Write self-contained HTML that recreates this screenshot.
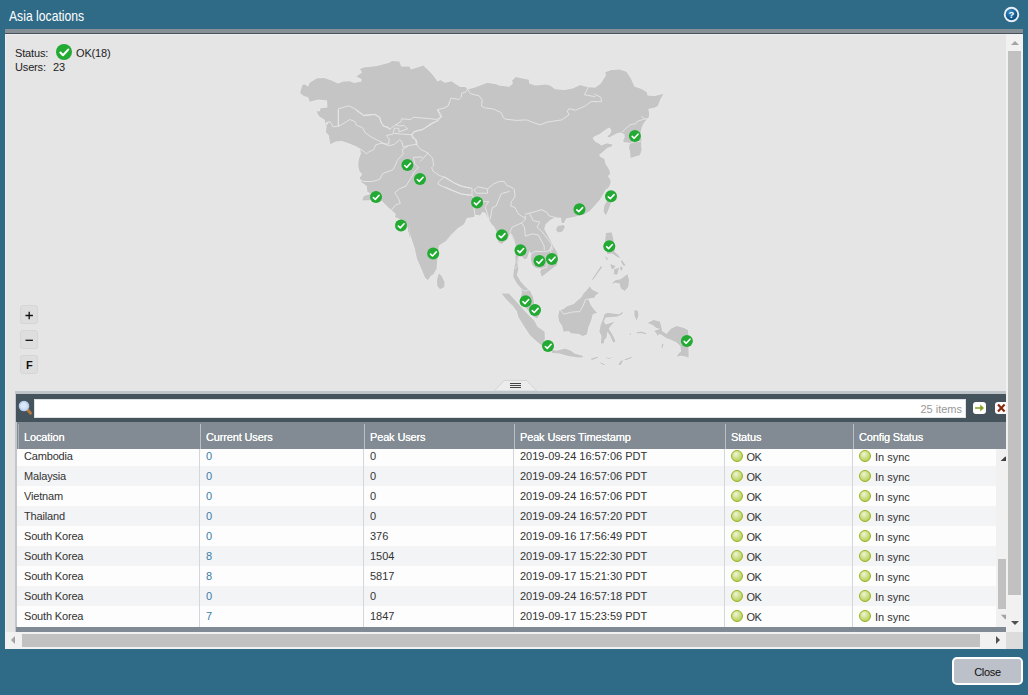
<!DOCTYPE html>
<html>
<head>
<meta charset="utf-8">
<title>Asia locations</title>
<style>
html,body{margin:0;padding:0;}
body{width:1028px;height:695px;overflow:hidden;background:#2f6a87;font-family:"Liberation Sans",sans-serif;font-size:11px;color:#222;position:relative;}
.abs{position:absolute;}
#title{left:9px;top:6px;color:#fff;font-size:14.5px;line-height:20px;transform-origin:0 50%;transform:scaleX(0.84);white-space:nowrap;}
#strip{left:5px;top:29px;width:1018px;height:4px;background:#868e96;}
#dline{left:5px;top:33px;width:1018px;height:1px;background:#47535c;}
#content{left:5px;top:34px;width:1018px;height:615px;background:#e5e5e5;}
#hl{left:5px;top:34px;width:1001px;height:1px;background:#ededed;}
#vl{left:5px;top:34px;width:1px;height:598px;background:#ededed;}
/* outer scrollbars */
#vsb{left:1006px;top:34px;width:17px;height:598px;background:#f1f1f1;}
#vthumb{left:1008px;top:51px;width:13px;height:544px;background:#c1c1c1;}
#hsb{left:5px;top:632px;width:1001px;height:17px;background:#f1f1f1;}
#hthumb{left:22px;top:634px;width:958px;height:13px;background:#c1c1c1;}
#corner{left:1006px;top:632px;width:17px;height:17px;background:#dcdcdc;}
.tri{width:0;height:0;}
/* status */
.stxt{letter-spacing:-0.15px;font-size:11px;line-height:13px;color:#222;white-space:nowrap;}
/* zoom buttons */
.zb{width:18px;height:19px;border:1px solid #d6d6d6;background:#dedede;border-radius:3px;box-sizing:border-box;}
/* grid */
#gtop{left:15px;top:391px;width:991px;height:3px;background:#bfc4c9;}
#gbar{left:16px;top:394px;width:990px;height:28px;background:#45535d;}
#gsearch{left:34px;top:399px;width:932px;height:19px;background:#fff;box-sizing:border-box;border:1px solid #dfe3e6;}
#gitems{left:900px;top:403px;width:62px;text-align:right;color:#999;font-size:11px;line-height:13px;}
#ghead{left:17px;top:422px;width:989px;height:27px;background:#828b93;}
.hc{letter-spacing:-0.15px;top:423px;height:26px;line-height:28px;color:#fff;font-size:11px;white-space:nowrap;text-shadow:0 0 0.5px #fff;}
.hs{top:424px;width:1px;height:25px;background:#b9bfc5;}
#gbody{left:17px;top:449px;width:979px;height:178px;overflow:hidden;background:#fdfdfd;}
.row{position:absolute;left:0;width:979px;height:20px;}
.row.alt{background:#f3f4f6;}
.c{position:absolute;top:0;height:20px;line-height:21px;font-size:11px;color:#333;white-space:nowrap;}
.c.lnk{color:#3a7ca8;}
.bs{position:absolute;top:0;width:1px;height:178px;background:#d3d7db;}
.dot{position:absolute;top:4px;width:12px;height:12px;border-radius:50%;box-sizing:border-box;border:1px solid #98b21c;background:radial-gradient(circle at 40% 32%,#eef4d6 0%,#cde089 45%,#a8c440 100%);}
#gleft1{left:15px;top:394px;width:1px;height:28px;background:#c3c7cb;}
#gleft1b{left:15px;top:422px;width:2px;height:210px;background:#c3c7cb;}
#gleft2{left:18px;top:424px;width:1px;height:25px;background:#a9b0b7;}
#gbot{left:16px;top:627px;width:990px;height:5px;background:#808a94;}
#ivsb{left:996px;top:449px;width:10px;height:178px;background:#f1f1f1;}
#ivthumb{left:998px;top:559px;width:8px;height:50px;background:#c1c1c1;}
/* close */
#close{left:952px;top:657px;width:71px;height:28px;box-sizing:border-box;border:2px solid #fff;border-radius:5px;background:#bcc0c8;text-align:center;font-size:11px;line-height:27px;letter-spacing:-0.3px;color:#111;}
</style>
</head>
<body>
<div id="title" class="abs">Asia locations</div>
<div id="strip" class="abs"></div>
<div id="dline" class="abs"></div>
<div id="content" class="abs"></div>
<div id="hl" class="abs"></div>
<div id="vl" class="abs"></div>
<!--MAP-->
<svg class="abs" style="left:0;top:0" width="1006" height="392" viewBox="0 0 1006 392">
<path d="M300.1 92.9 302.3 84.9 304.5 84.2 308.1 86.4 309.6 82.7 316.9 78.3 324.2 78.1 331.5 80.5 338.0 83.5 343.2 81.6 349.7 81.3 354.1 83.0 361.4 81.6 361.4 79.1 356.3 76.6 362.1 72.5 359.9 68.9 363.6 67.4 376.7 65.9 388.4 63.0 392.0 61.1 399.3 61.6 401.2 66.4 409.5 66.4 411.0 69.6 423.4 65.5 431.4 73.2 437.7 81.6 440.2 80.1 445.0 82.7 451.6 81.3 455.9 84.2 460.3 87.1 465.4 87.1 467.6 89.3 474.2 87.8 487.3 82.7 496.1 84.2 499.0 85.6 509.2 86.8 512.9 83.5 512.1 80.5 515.8 76.9 528.9 79.8 529.2 83.5 535.5 85.6 545.7 84.6 550.1 85.6 555.2 89.3 564.7 90.0 573.4 88.3 580.0 84.9 587.3 87.1 595.0 87.8 600.8 83.5 605.9 75.4 605.2 72.2 611.1 69.9 619.8 69.6 626.4 71.8 630.8 78.3 634.4 86.4 641.7 88.9 646.8 92.2 647.5 95.6 654.8 95.9 663.6 93.7 660.7 98.8 657.7 106.1 654.8 107.5 648.3 109.0 649.3 113.4 648.7 117.7 645.3 119.2 647.0 119.3 644.0 122.8 641.7 127.5 640.5 133.3 641.5 139.2 641.1 143.9 641.7 149.7 640.0 154.9 630.6 157.9 630.0 150.9 628.9 147.4 630.0 143.3 624.8 142.7 623.0 140.9 624.8 136.8 624.2 133.9 620.7 132.4 617.2 133.3 609.0 137.4 607.3 136.3 610.2 133.9 611.4 130.4 609.6 127.5 606.1 129.3 599.7 133.9 593.9 136.8 592.7 138.6 595.6 142.1 598.5 143.3 601.4 145.6 606.7 143.3 612.5 144.4 611.9 146.2 607.3 147.9 603.8 150.9 599.1 154.9 600.3 156.7 604.4 159.0 605.5 163.7 609.0 169.5 610.2 172.4 609.6 174.8 607.9 176.0 610.2 179.5 610.8 182.4 609.0 187.0 606.1 190.0 606.7 187.8 603.0 194.4 599.4 200.2 595.0 205.3 589.5 211.2 583.6 214.8 573.4 217.0 566.1 218.5 563.9 222.9 561.7 222.9 561.0 217.7 555.2 217.5 550.1 219.9 545.7 224.3 544.2 228.7 547.1 234.5 550.8 241.1 553.7 246.9 556.6 251.3 557.4 255.0 557.0 249.8 557.7 254.2 557.5 261.5 557.0 265.1 551.9 268.8 545.3 273.9 541.7 276.8 540.2 271.7 541.7 268.8 535.9 268.0 532.2 265.1 530.8 259.3 531.5 253.5 529.3 251.3 527.1 258.6 524.2 259.3 522.0 256.4 519.1 256.4 518.3 261.5 518.3 268.8 516.9 275.3 520.5 281.2 525.6 287.0 530.0 290.7 533.2 297.2 534.1 303.8 537.3 311.1 538.8 316.2 536.6 318.4 533.2 316.2 530.0 312.6 524.9 306.7 521.0 300.9 521.0 296.5 522.0 292.9 521.3 288.5 516.9 283.4 513.2 276.8 514.0 268.8 515.4 262.9 515.4 255.6 516.1 246.9 513.2 239.6 510.3 233.0 507.4 239.6 501.5 244.0 497.9 241.8 497.1 231.6 496.8 232.3 494.6 227.2 491.7 224.3 488.8 219.2 485.1 212.6 482.2 212.2 480.0 215.6 474.9 214.8 474.2 217.0 466.9 218.0 464.0 224.3 458.1 228.0 450.8 234.5 445.0 241.1 457.7 227.9 451.2 235.2 446.1 241.1 438.8 245.4 437.3 260.0 436.6 268.8 433.7 273.9 430.8 276.1 427.8 280.2 424.9 277.5 422.0 270.2 416.9 258.6 414.7 248.3 410.3 235.2 408.9 225.0 410.3 239.6 408.1 230.9 407.4 226.5 400.1 219.2 395.0 217.0 395.7 214.1 388.4 207.5 382.6 201.7 382.7 201.2 370.3 200.2 362.0 200.5 363.8 196.1 371.1 193.9 367.4 191.7 366.7 185.9 361.6 182.2 359.4 177.9 362.3 174.2 359.4 171.3 358.2 165.5 358.7 159.6 360.9 153.8 360.1 148.7 356.5 146.5 349.2 143.6 341.9 140.9 336.1 141.4 330.2 144.3 328.8 135.5 325.8 131.9 326.6 126.1 324.4 118.8 325.9 126.5 329.3 121.4 325.9 123.6 324.9 119.9 319.1 116.3 316.2 111.2 319.8 111.2 320.5 108.3 327.4 107.5 327.1 100.5 318.3 99.5 309.6 101.7 308.1 97.3 303.8 95.9ZM438.8 273.2 441.7 276.1 444.6 281.9 444.3 287.0 440.2 289.2 437.3 286.3 437.0 279.7ZM556.6 228.0 558.1 225.8 563.9 225.0 564.9 227.2 562.5 231.6 558.1 232.6 556.2 230.6ZM609.3 198.8 611.1 201.7 610.2 205.3 607.8 211.2 605.8 215.4 603.5 211.6 604.2 206.1 606.7 201.0ZM605.9 233.0 611.7 232.3 613.5 239.6 613.9 246.9 614.7 252.0 618.3 254.9 620.2 258.3 616.8 256.4 611.7 253.5 607.4 254.2 605.2 246.9 605.2 239.6ZM611.8 252.5 618.7 256 620.6 258.8 615.3 255.8ZM605.0 255.4 608.9 259.8 606.1 259.5ZM621.6 259.6 625.8 265.5 623.6 266.1 621.0 262ZM610.4 264.1 615.8 266 612.7 269.8 610.8 267.2ZM614.2 269.3 619.3 267.5 617.2 274.8 613.7 274.3ZM620.2 266.2 622.7 267.2 622 270.9 620.2 269.8ZM592 279.3 601.1 265.8 602.2 267.2 592.8 280ZM611.5 284 615.3 280.2 620.4 279.3 624.2 276.4 627.4 274.1 629.1 280.2 628.2 287.1 624.8 290.9 620.8 288.5 619.6 283.6 615.3 282.8ZM501.6 293.5 508.9 293.5 514.0 298.9 519.8 305.4 524.9 311.3 530.0 316.4 534.4 320.8 537.3 326.6 544.6 331.7 544.9 339.0 543.4 343.4 545.3 347.0 542.4 346.0 537.3 341.9 530.0 335.3 524.2 326.6 518.3 317.1 516.9 311.3 512.5 305.4 505.9 298.9ZM551.2 349.2 556.3 350.7 565.0 348.5 570.9 350.7 574.5 353.6 582.6 355.8 583.3 357.2 578.2 357.5 568.0 356.1 559.2 353.6 551.9 352.9ZM589.8 286.2 592.0 289.4 598.9 293.0 595.7 295.2 594.2 298.1 588.4 299.3 590.6 304.7 594.2 309.8 597.1 312.7 592.8 314.2 591.3 320.0 588.4 327.3 586.9 334.6 582.6 336.1 578.9 333.9 570.9 333.2 568.7 331.0 563.6 331.7 562.1 325.9 559.2 321.5 558.2 316.4 559.2 310.5 563.6 309.1 567.2 306.2 573.8 304.0 578.9 298.9 582.6 294.5 586.9 290.1ZM604.4 314.2 607.4 312.7 619.0 314.2 623.4 311.3 622.0 314.2 617.6 316.4 605.9 317.4 603.7 321.5 605.9 324.4 610.3 322.9 614.7 321.5 610.3 326.6 608.8 328.8 611.7 333.2 614.7 339.0 615.4 341.9 613.2 342.6 610.3 336.1 607.4 331.7 606.6 337.5 604.4 339.7 603.7 343.4 600.8 343.4 601.5 336.1 599.3 331.7 600.8 324.4 603.0 319.3ZM634.4 309.8 638.0 311.0 638.5 315.6 636.6 320.8 634.4 315.6ZM628.6 333.2 631.5 333.4 630.8 334.9ZM636.6 332.0 641.7 331.4 646.1 333.2 646.8 334.6 641.7 333.2 636.6 333.2ZM662.1 343.4 663.6 344.1 662.4 348.5 661.4 347.7ZM590.6 358.7 597.1 356.8 598.6 357.5 592.0 359.9ZM603.7 357.2 608.8 358.0 613.9 356.8 608.8 359.0ZM600.1 362.3 605.2 364.5 604.4 365.3 600.8 363.8ZM618.3 364.5 620.5 360.9 623.4 360.1 620.5 365.3ZM624.1 359.4 631.4 356.8 632.2 357.5 625.6 360.4ZM647.5 322.9 653.4 320.0 659.9 321.5 661.4 327.3 662.1 331.0 666.5 333.9 670.9 328.8 676.7 326.1 684.0 328.0 688.4 330.2 688.7 334.6 689.1 358.0 685.5 356.5 681.1 355.8 676.7 356.8 678.9 352.9 681.1 351.4 680.4 346.3 676.7 342.6 670.9 339.7 666.5 338.3 662.1 335.3 659.2 333.9 657.7 336.1 656.3 333.2 654.1 331.0 659.9 328.8 656.3 328.0 652.6 325.1Z" fill="#c5c5c5" stroke="#eaeaea" stroke-width="1.2" stroke-linejoin="round" paint-order="stroke"/>
<path d="M467.6 89.3 470.5 93.7 479.3 95.9 482.2 100.2 481.5 106.1 484.4 107.8 493.2 109.0 501.2 112.6 503.4 117.7 505.6 119.2 516.5 120.4 526.7 119.9 534.0 122.9 540.6 124.8 547.1 122.1 561.7 119.9 569.0 114.8 567.3 111.2 569.0 108.7 575.6 110.2 585.1 106.1 590.9 101.7 595.0 101.4M595.0 94.4 600.8 97.3 601.6 101.7 595.0 101.7M588.7 86.4 584.4 94.7 595.0 96.6M467.6 89.3 465.4 92.2 461.8 93.2 461.1 97.3 458.9 99.5 451.1 98.0 447.9 106.1 445.0 107.5M445.0 107.8 437.3 109.7 440.9 117.0 438.0 120.7 430.7 123.6 423.4 129.4 416.1 130.9 411.7 134.5 412.5 138.2 416.1 139.6 417.3 144.3M622.0 132.0 630.0 124.8 635.9 123.6 637.3 121.4 643.9 119.2 646.1 118.5M641.7 116.3 644.6 119.2M624.8 142.7 630.0 143.3 634.7 141.7 640.5 141.5M338.2 110.0 338.2 126.1 341.9 124.6 349.9 119.5 355.0 121.7 356.5 125.3 362.3 127.5 365.2 132.6 371.1 137.0 378.4 140.6 382.7 142.8M338.2 126.1 333.1 126.8 330.2 121.7 326.6 122.4 325.8 126.1M360.1 148.7 366.7 153.8 368.2 152.3 374.0 149.4 375.5 145.0 379.8 143.6 382.7 143.3 388.6 145.8 394.4 144.3 399.5 139.9 401.7 141.4 403.2 147.2 407.6 145.8 416.3 144.3M355.8 110.0 363.8 115.8 375.5 114.4 379.8 117.3 381.3 123.1 384.2 126.1 390.0 129.0 395.9 124.6 401.0 121.7 401.7 118.8 410.5 119.5 413.4 117.3 422.1 118.0 430.9 118.8 436.7 119.5 441.8 116.6 438.2 110.0M438.2 120.2 430.9 124.6 424.3 128.2 422.1 129.7 413.4 131.9 411.9 135.5 415.6 139.2 416.3 144.3M382.7 143.3 388.6 144.3 389.3 139.2 386.4 135.5 393.0 134.1 394.4 128.2 398.8 128.2 398.8 131.9 407.6 129.0 403.9 125.3 399.5 126.1 395.9 124.6M394.4 133.3 401.7 134.1 411.9 134.8M338.5 126.5 338.5 108.7 349.0 105.8 356.3 109.7 363.6 115.1 374.5 114.5 379.6 117.7 381.1 122.1 383.3 126.2 388.4 127.2 389.8 129.4M359.4 179.3 363.8 181.5 372.5 181.5 379.8 179.3 382.7 173.5 393.0 169.8 395.9 164.0 397.3 160.3 403.2 153.8 402.4 149.4 407.6 146.5M416.3 144.3 420.7 149.4 428.0 153.0 420.7 161.1M428.0 153.0 432.4 158.2 433.8 165.5 431.6 167.6 433.1 171.3 439.7 175.7 444.0 177.1 438.2 182.2 438.2 184.4 451.3 190.3 461.5 193.9 470.0 195.4M444.0 177.1 454.2 183.0 460.1 185.9 470.0 188.1M422.1 157.0 413.4 157.4 414.8 164.0 418.5 167.6 414.8 171.3 410.5 178.6 406.1 185.9 399.5 188.8 394.7 192.9 398.1 197.6 400.3 203.4 395.9 204.8 391.5 210.0M445.0 176.9 453.8 182.7 462.5 186.4 472.0 188.3 472.0 195.1 461.1 194.1 453.8 190.8 445.0 187.1M474.2 190.0 477.8 186.8 487.3 188.9 487.6 193.2 476.4 193.2 474.2 190.0M472.0 195.1 474.2 198.8 473.5 204.6 474.9 214.8M474.2 198.8 481.5 201.7 488.8 201.7 485.1 206.8 487.3 213.4 488.8 219.2M487.6 188.9 493.2 184.2 498.3 181.7 504.1 181.3 507.0 185.6 509.9 186.4 514.3 189.3 515.0 196.6 511.4 201.7 510.7 206.1 515.0 207.5 518.0 213.4 523.8 217.7 525.3 216.3 525.3 219.2M509.2 191.5 501.2 193.7 496.1 206.1 492.4 207.5 490.2 219.2M525.3 214.1 529.6 213.1 542.0 209.7 547.1 212.6 548.6 215.6 555.2 217.5M525.3 219.2 521.6 222.9 524.5 227.2 525.3 236.0 532.6 233.8 538.4 235.0 544.2 246.2 544.2 249.8M529.6 213.4 533.3 220.7 539.8 222.1 536.9 227.2 541.3 230.9 547.1 238.2 551.5 244.0 552.3 249.8M521.6 222.9 512.1 227.2 509.9 232.3 513.6 238.2 515.0 244.7M531.5 253.5 535.1 251.3 543.2 251.6 549.0 251.0 551.2 246.9M551.2 246.9 550.5 252.0 553.4 254.2 547.5 256.4 546.8 267.3 541.7 268.8M519.1 256.4 516.9 261.5 518.3 265.1 514.7 268.8M522.0 289.2 524.9 291.4 527.8 289.9 529.3 289.9M560.7 310.5 563.6 314.2 572.3 312.0 579.6 311.6 582.6 306.9 585.5 299.6 592.8 298.4M578.9 298.9 581.1 297.4 582.6 294.5M688.7 330.2 689.1 358.0" fill="none" stroke="#e6e6e6" stroke-width="0.9" stroke-linejoin="round" stroke-linecap="round"/>
<g transform="translate(407.4 165)"><circle r="6" fill="#22aa33"/><path d="M-2.7 0.5L-0.7 2.4L3.1 -1.7" fill="none" stroke="#fff" stroke-width="1.6" stroke-linecap="round" stroke-linejoin="round"/></g>
<g transform="translate(420 179)"><circle r="6" fill="#22aa33"/><path d="M-2.7 0.5L-0.7 2.4L3.1 -1.7" fill="none" stroke="#fff" stroke-width="1.6" stroke-linecap="round" stroke-linejoin="round"/></g>
<g transform="translate(376 197)"><circle r="6" fill="#22aa33"/><path d="M-2.7 0.5L-0.7 2.4L3.1 -1.7" fill="none" stroke="#fff" stroke-width="1.6" stroke-linecap="round" stroke-linejoin="round"/></g>
<g transform="translate(401 225.5)"><circle r="6" fill="#22aa33"/><path d="M-2.7 0.5L-0.7 2.4L3.1 -1.7" fill="none" stroke="#fff" stroke-width="1.6" stroke-linecap="round" stroke-linejoin="round"/></g>
<g transform="translate(433.2 253.6)"><circle r="6" fill="#22aa33"/><path d="M-2.7 0.5L-0.7 2.4L3.1 -1.7" fill="none" stroke="#fff" stroke-width="1.6" stroke-linecap="round" stroke-linejoin="round"/></g>
<g transform="translate(477.1 202.4)"><circle r="6" fill="#22aa33"/><path d="M-2.7 0.5L-0.7 2.4L3.1 -1.7" fill="none" stroke="#fff" stroke-width="1.6" stroke-linecap="round" stroke-linejoin="round"/></g>
<g transform="translate(501.9 235.3)"><circle r="6" fill="#22aa33"/><path d="M-2.7 0.5L-0.7 2.4L3.1 -1.7" fill="none" stroke="#fff" stroke-width="1.6" stroke-linecap="round" stroke-linejoin="round"/></g>
<g transform="translate(520.5 250.2)"><circle r="6" fill="#22aa33"/><path d="M-2.7 0.5L-0.7 2.4L3.1 -1.7" fill="none" stroke="#fff" stroke-width="1.6" stroke-linecap="round" stroke-linejoin="round"/></g>
<g transform="translate(539.5 261)"><circle r="6" fill="#22aa33"/><path d="M-2.7 0.5L-0.7 2.4L3.1 -1.7" fill="none" stroke="#fff" stroke-width="1.6" stroke-linecap="round" stroke-linejoin="round"/></g>
<g transform="translate(551.9 258.9)"><circle r="6" fill="#22aa33"/><path d="M-2.7 0.5L-0.7 2.4L3.1 -1.7" fill="none" stroke="#fff" stroke-width="1.6" stroke-linecap="round" stroke-linejoin="round"/></g>
<g transform="translate(525.6 301.2)"><circle r="6" fill="#22aa33"/><path d="M-2.7 0.5L-0.7 2.4L3.1 -1.7" fill="none" stroke="#fff" stroke-width="1.6" stroke-linecap="round" stroke-linejoin="round"/></g>
<g transform="translate(535 310.1)"><circle r="6" fill="#22aa33"/><path d="M-2.7 0.5L-0.7 2.4L3.1 -1.7" fill="none" stroke="#fff" stroke-width="1.6" stroke-linecap="round" stroke-linejoin="round"/></g>
<g transform="translate(548 346)"><circle r="6" fill="#22aa33"/><path d="M-2.7 0.5L-0.7 2.4L3.1 -1.7" fill="none" stroke="#fff" stroke-width="1.6" stroke-linecap="round" stroke-linejoin="round"/></g>
<g transform="translate(579.5 209.3)"><circle r="6" fill="#22aa33"/><path d="M-2.7 0.5L-0.7 2.4L3.1 -1.7" fill="none" stroke="#fff" stroke-width="1.6" stroke-linecap="round" stroke-linejoin="round"/></g>
<g transform="translate(611 196.3)"><circle r="6" fill="#22aa33"/><path d="M-2.7 0.5L-0.7 2.4L3.1 -1.7" fill="none" stroke="#fff" stroke-width="1.6" stroke-linecap="round" stroke-linejoin="round"/></g>
<g transform="translate(609.3 246.2)"><circle r="6" fill="#22aa33"/><path d="M-2.7 0.5L-0.7 2.4L3.1 -1.7" fill="none" stroke="#fff" stroke-width="1.6" stroke-linecap="round" stroke-linejoin="round"/></g>
<g transform="translate(634.9 135.9)"><circle r="6" fill="#22aa33"/><path d="M-2.7 0.5L-0.7 2.4L3.1 -1.7" fill="none" stroke="#fff" stroke-width="1.6" stroke-linecap="round" stroke-linejoin="round"/></g>
<g transform="translate(686.9 340.9)"><circle r="6" fill="#22aa33"/><path d="M-2.7 0.5L-0.7 2.4L3.1 -1.7" fill="none" stroke="#fff" stroke-width="1.6" stroke-linecap="round" stroke-linejoin="round"/></g>
</svg>
<!--/MAP-->
<!--STATUS-->
<div class="abs stxt" style="left:15px;top:47px">Status:</div>
<svg class="abs" style="left:56px;top:44px" width="16" height="16" viewBox="-8 -8 16 16"><circle r="8" fill="#22aa33"/><path d="M-3.6 0.6L-1 3.2L4.2 -2.4" fill="none" stroke="#fff" stroke-width="2.1" stroke-linecap="round" stroke-linejoin="round"/></svg>
<div class="abs stxt" style="left:76px;top:47px">OK(18)</div>
<div class="abs stxt" style="left:15px;top:61px">Users:</div>
<div class="abs stxt" style="left:53px;top:61px">23</div>
<div class="abs zb" style="left:20px;top:305px"><svg width="16" height="17" viewBox="0 0 16 17" style="display:block"><path d="M4.5 9.5h7.4M8.2 5.8v7.4" stroke="#111" stroke-width="1.3" fill="none"/></svg></div>
<div class="abs zb" style="left:20px;top:330px"><svg width="16" height="17" viewBox="0 0 16 17" style="display:block"><path d="M4.5 9.3h7.4" stroke="#111" stroke-width="1.3" fill="none"/></svg></div>
<div class="abs zb" style="left:20px;top:355px"><span style="position:absolute;left:5px;top:3px;font-weight:bold;font-size:11px;line-height:13px;color:#111">F</span></div>
<svg class="abs" style="left:490px;top:378px" width="52" height="14" viewBox="490 378 52 14"><path d="M494.3 391L504.3 380.4H526.7L536.7 391Z" fill="#ececec" stroke="#cfcfcf" stroke-width="0.8"/><path d="M510 383.5h11M510 385.5h11M510 387.5h11" stroke="#444" stroke-width="1"/></svg>
<!--/STATUS-->
<!--GRID-->
<div id="gtop" class="abs"></div>
<div id="gbar" class="abs"></div>
<div id="gleft1" class="abs"></div><div id="gleft1b" class="abs"></div>
<svg class="abs" style="left:18px;top:399px" width="16" height="18" viewBox="0 0 16 18"><line x1="10" y1="11.3" x2="12.6" y2="14.2" stroke="#b97a3c" stroke-width="2.8" stroke-linecap="round"/><circle cx="6" cy="7" r="4.7" fill="#c9dcf4" stroke="#b4cdf0" stroke-width="1.2"/><circle cx="5.6" cy="6.4" r="3" fill="#d9e7f9"/></svg>
<div id="gsearch" class="abs"></div>
<div id="gitems" class="abs">25 items</div>
<svg class="abs" style="left:973px;top:402px" width="13" height="12" viewBox="0 0 13 12"><rect x="0" y="0" width="13" height="12" rx="3" fill="#fff"/><path d="M2 5.2h5.2V2.6L11 6 7.2 9.4V6.8H2z" fill="#86a31f"/></svg>
<svg class="abs" style="left:995px;top:402px" width="11" height="12" viewBox="0 0 11 12"><rect x="0" y="0" width="14" height="12" rx="3" fill="#fff"/><path d="M3 2.6L9.6 9.4M9.6 2.6L3 9.4" stroke="#8c2a0c" stroke-width="2.2" fill="none"/></svg>
<div id="ghead" class="abs"></div>
<div class="abs hc" style="left:24px">Location</div>
<div class="abs hc" style="left:206px">Current Users</div>
<div class="abs hc" style="left:370px">Peak Users</div>
<div class="abs hc" style="left:520px">Peak Users Timestamp</div>
<div class="abs hc" style="left:731px">Status</div>
<div class="abs hc" style="left:859px">Config Status</div>
<div class="abs hs" style="left:200px"></div>
<div class="abs hs" style="left:364px"></div>
<div class="abs hs" style="left:514px"></div>
<div class="abs hs" style="left:725px"></div>
<div class="abs hs" style="left:853px"></div>
<div id="gleft2" class="abs"></div>
<div id="gbody" class="abs">
<div class="row" style="top:-3px"><span class="c" style="left:7px;letter-spacing:-0.17px">Cambodia</span><span class="c lnk" style="left:189px">0</span><span class="c" style="left:353px">0</span><span class="c" style="left:503px">2019-09-24 16:57:06 PDT</span><i class="dot" style="left:714px"></i><span class="c" style="left:729.5px;top:1px;letter-spacing:-0.5px">OK</span><i class="dot" style="left:842px"></i><span class="c" style="left:858px;top:1px">In sync</span></div>
<div class="row alt" style="top:17px"><span class="c" style="left:7px;letter-spacing:-0.17px">Malaysia</span><span class="c lnk" style="left:189px">0</span><span class="c" style="left:353px">0</span><span class="c" style="left:503px">2019-09-24 16:57:06 PDT</span><i class="dot" style="left:714px"></i><span class="c" style="left:729.5px;top:1px;letter-spacing:-0.5px">OK</span><i class="dot" style="left:842px"></i><span class="c" style="left:858px;top:1px">In sync</span></div>
<div class="row" style="top:37px"><span class="c" style="left:7px;letter-spacing:-0.17px">Vietnam</span><span class="c lnk" style="left:189px">0</span><span class="c" style="left:353px">0</span><span class="c" style="left:503px">2019-09-24 16:57:06 PDT</span><i class="dot" style="left:714px"></i><span class="c" style="left:729.5px;top:1px;letter-spacing:-0.5px">OK</span><i class="dot" style="left:842px"></i><span class="c" style="left:858px;top:1px">In sync</span></div>
<div class="row alt" style="top:57px"><span class="c" style="left:7px;letter-spacing:-0.17px">Thailand</span><span class="c lnk" style="left:189px">0</span><span class="c" style="left:353px">0</span><span class="c" style="left:503px">2019-09-24 16:57:20 PDT</span><i class="dot" style="left:714px"></i><span class="c" style="left:729.5px;top:1px;letter-spacing:-0.5px">OK</span><i class="dot" style="left:842px"></i><span class="c" style="left:858px;top:1px">In sync</span></div>
<div class="row" style="top:77px"><span class="c" style="left:7px;letter-spacing:-0.17px">South Korea</span><span class="c lnk" style="left:189px">0</span><span class="c" style="left:353px">376</span><span class="c" style="left:503px">2019-09-16 17:56:49 PDT</span><i class="dot" style="left:714px"></i><span class="c" style="left:729.5px;top:1px;letter-spacing:-0.5px">OK</span><i class="dot" style="left:842px"></i><span class="c" style="left:858px;top:1px">In sync</span></div>
<div class="row alt" style="top:97px"><span class="c" style="left:7px;letter-spacing:-0.17px">South Korea</span><span class="c lnk" style="left:189px">8</span><span class="c" style="left:353px">1504</span><span class="c" style="left:503px">2019-09-17 15:22:30 PDT</span><i class="dot" style="left:714px"></i><span class="c" style="left:729.5px;top:1px;letter-spacing:-0.5px">OK</span><i class="dot" style="left:842px"></i><span class="c" style="left:858px;top:1px">In sync</span></div>
<div class="row" style="top:117px"><span class="c" style="left:7px;letter-spacing:-0.17px">South Korea</span><span class="c lnk" style="left:189px">8</span><span class="c" style="left:353px">5817</span><span class="c" style="left:503px">2019-09-17 15:21:30 PDT</span><i class="dot" style="left:714px"></i><span class="c" style="left:729.5px;top:1px;letter-spacing:-0.5px">OK</span><i class="dot" style="left:842px"></i><span class="c" style="left:858px;top:1px">In sync</span></div>
<div class="row alt" style="top:137px"><span class="c" style="left:7px;letter-spacing:-0.17px">South Korea</span><span class="c lnk" style="left:189px">0</span><span class="c" style="left:353px">0</span><span class="c" style="left:503px">2019-09-24 16:57:18 PDT</span><i class="dot" style="left:714px"></i><span class="c" style="left:729.5px;top:1px;letter-spacing:-0.5px">OK</span><i class="dot" style="left:842px"></i><span class="c" style="left:858px;top:1px">In sync</span></div>
<div class="row" style="top:157px"><span class="c" style="left:7px;letter-spacing:-0.17px">South Korea</span><span class="c lnk" style="left:189px">7</span><span class="c" style="left:353px">1847</span><span class="c" style="left:503px">2019-09-17 15:23:59 PDT</span><i class="dot" style="left:714px"></i><span class="c" style="left:729.5px;top:1px;letter-spacing:-0.5px">OK</span><i class="dot" style="left:842px"></i><span class="c" style="left:858px;top:1px">In sync</span></div>
<div class="bs" style="left:182px"></div>
<div class="bs" style="left:346px"></div>
<div class="bs" style="left:496px"></div>
<div class="bs" style="left:707px"></div>
<div class="bs" style="left:835px"></div>
</div>
<div id="ivsb" class="abs"></div>
<div id="ivthumb" class="abs"></div>
<svg class="abs" style="left:996px;top:449px" width="10" height="178" viewBox="996 449 10 178"><path d="M1000.6 461L1005.3 456.4L1010 461Z" fill="#404040"/><path d="M1000.8 614.8H1010L1005.4 619.4Z" fill="#a3a3a3"/></svg>
<div id="gbot" class="abs"></div>
<!--/GRID-->
<div id="vsb" class="abs"></div>
<div id="vthumb" class="abs"></div>
<div id="hsb" class="abs"></div>
<div id="hthumb" class="abs"></div>
<div id="corner" class="abs"></div>
<svg class="abs" style="left:1003px;top:6px" width="17" height="17" viewBox="-8.5 -8.5 17 17"><defs><radialGradient id="hg" cx="40%" cy="30%" r="75%"><stop offset="0" stop-color="#3f8fc4"/><stop offset="0.6" stop-color="#145f96"/><stop offset="1" stop-color="#0b4878"/></radialGradient></defs><circle r="7.7" fill="#e9f0f7"/><circle r="5.8" fill="url(#hg)"/><text x="0" y="3.3" text-anchor="middle" font-family="Liberation Sans, sans-serif" font-weight="bold" font-size="9.5" fill="#fff">?</text></svg>
<div class="abs tri" style="left:1011px;top:41px;border-left:4px solid transparent;border-right:4px solid transparent;border-bottom:4px solid #a3a3a3;"></div>
<div class="abs tri" style="left:1011px;top:621px;border-left:4px solid transparent;border-right:4px solid transparent;border-top:4px solid #505050;"></div>
<div class="abs tri" style="left:11px;top:636px;border-top:4px solid transparent;border-bottom:4px solid transparent;border-right:4px solid #a3a3a3;"></div>
<div class="abs tri" style="left:996px;top:636px;border-top:4px solid transparent;border-bottom:4px solid transparent;border-left:4px solid #505050;"></div>
<div id="close" class="abs">Close</div>
</body>
</html>
